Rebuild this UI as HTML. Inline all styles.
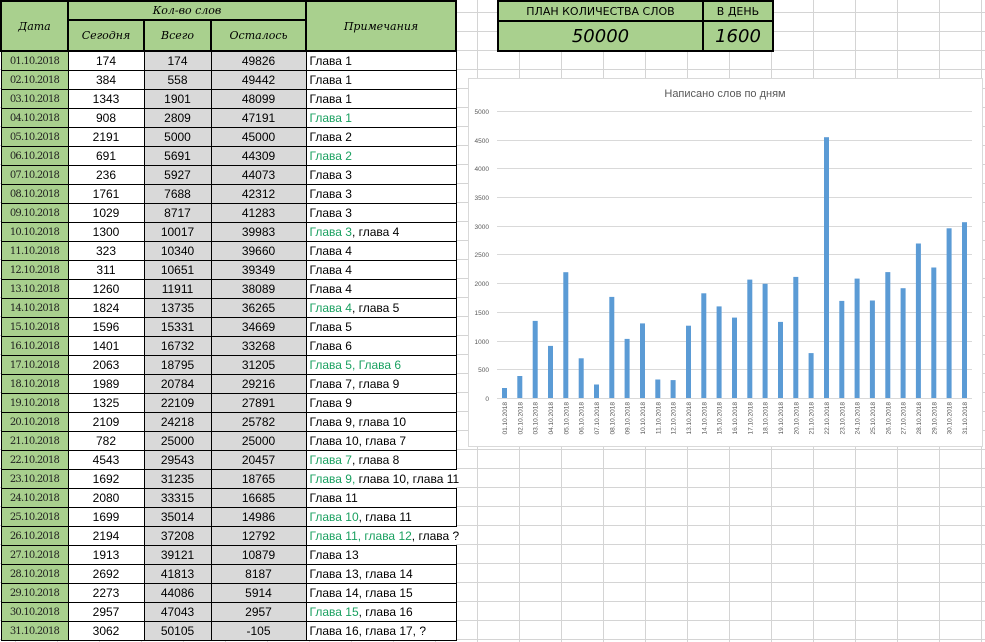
<!DOCTYPE html>
<html><head><meta charset="utf-8">
<style>
html,body{margin:0;padding:0;}
body{width:985px;height:642px;overflow:hidden;position:relative;background:#fff;
font-family:"Liberation Sans","DejaVu Sans",sans-serif;
background-image:linear-gradient(to right,#d4d4d4 1px,transparent 1px),linear-gradient(to bottom,#d4d4d4 1px,transparent 1px);
background-size:42px 19px,42px 19px;background-position:477px 12px,0 12px;}
table{position:absolute;left:0;top:0;border-collapse:collapse;table-layout:fixed;}
.main{width:455px;}
td{padding:0;height:18px;font-size:12px;border:1px solid #000;overflow:visible;white-space:nowrap;background:#fff;}
.h td{background:#a9d08e;font-family:"Comic Sans MS","DejaVu Serif",serif;font-style:italic;font-size:11px;text-align:center;border:2px solid #000;}
.d{background:#a9d08e;font-family:"DejaVu Serif","Liberation Serif",serif;font-size:10px;text-align:center;letter-spacing:-0.8px;color:#222;}
.c{text-align:center;}
.g{background:#d9d9d9;text-align:center;}
.n{padding-left:3px;}
.gr{color:#1aa060;}
.plan{position:absolute;left:497px;top:0;border-collapse:collapse;}
.plan td{background:#a9d08e;border:2px solid #000;text-align:center;font-family:"Comic Sans MS","DejaVu Sans",sans-serif;}
</style></head><body>
<table class="main">
<colgroup><col style="width:67px"><col style="width:76px"><col style="width:67px"><col style="width:95px"><col style="width:150px"></colgroup>
<tr class="h"><td rowspan="2" style="height:48px">Дата</td><td colspan="3" style="height:17px">Кол-во слов</td><td rowspan="2">Примечания</td></tr>
<tr class="h"><td style="height:28px">Сегодня</td><td>Всего</td><td>Осталось</td></tr>
<tr><td class="d">01.10.2018</td><td class="c">174</td><td class="g">174</td><td class="g">49826</td><td class="n">Глава 1</td></tr>
<tr><td class="d">02.10.2018</td><td class="c">384</td><td class="g">558</td><td class="g">49442</td><td class="n">Глава 1</td></tr>
<tr><td class="d">03.10.2018</td><td class="c">1343</td><td class="g">1901</td><td class="g">48099</td><td class="n">Глава 1</td></tr>
<tr><td class="d">04.10.2018</td><td class="c">908</td><td class="g">2809</td><td class="g">47191</td><td class="n"><span class="gr">Глава 1</span></td></tr>
<tr><td class="d">05.10.2018</td><td class="c">2191</td><td class="g">5000</td><td class="g">45000</td><td class="n">Глава 2</td></tr>
<tr><td class="d">06.10.2018</td><td class="c">691</td><td class="g">5691</td><td class="g">44309</td><td class="n"><span class="gr">Глава 2</span></td></tr>
<tr><td class="d">07.10.2018</td><td class="c">236</td><td class="g">5927</td><td class="g">44073</td><td class="n">Глава 3</td></tr>
<tr><td class="d">08.10.2018</td><td class="c">1761</td><td class="g">7688</td><td class="g">42312</td><td class="n">Глава 3</td></tr>
<tr><td class="d">09.10.2018</td><td class="c">1029</td><td class="g">8717</td><td class="g">41283</td><td class="n">Глава 3</td></tr>
<tr><td class="d">10.10.2018</td><td class="c">1300</td><td class="g">10017</td><td class="g">39983</td><td class="n"><span class="gr">Глава 3</span>, глава 4</td></tr>
<tr><td class="d">11.10.2018</td><td class="c">323</td><td class="g">10340</td><td class="g">39660</td><td class="n">Глава 4</td></tr>
<tr><td class="d">12.10.2018</td><td class="c">311</td><td class="g">10651</td><td class="g">39349</td><td class="n">Глава 4</td></tr>
<tr><td class="d">13.10.2018</td><td class="c">1260</td><td class="g">11911</td><td class="g">38089</td><td class="n">Глава 4</td></tr>
<tr><td class="d">14.10.2018</td><td class="c">1824</td><td class="g">13735</td><td class="g">36265</td><td class="n"><span class="gr">Глава 4</span>, глава 5</td></tr>
<tr><td class="d">15.10.2018</td><td class="c">1596</td><td class="g">15331</td><td class="g">34669</td><td class="n">Глава 5</td></tr>
<tr><td class="d">16.10.2018</td><td class="c">1401</td><td class="g">16732</td><td class="g">33268</td><td class="n">Глава 6</td></tr>
<tr><td class="d">17.10.2018</td><td class="c">2063</td><td class="g">18795</td><td class="g">31205</td><td class="n"><span class="gr">Глава 5, Глава 6</span></td></tr>
<tr><td class="d">18.10.2018</td><td class="c">1989</td><td class="g">20784</td><td class="g">29216</td><td class="n">Глава 7, глава 9</td></tr>
<tr><td class="d">19.10.2018</td><td class="c">1325</td><td class="g">22109</td><td class="g">27891</td><td class="n">Глава 9</td></tr>
<tr><td class="d">20.10.2018</td><td class="c">2109</td><td class="g">24218</td><td class="g">25782</td><td class="n">Глава 9, глава 10</td></tr>
<tr><td class="d">21.10.2018</td><td class="c">782</td><td class="g">25000</td><td class="g">25000</td><td class="n">Глава 10, глава 7</td></tr>
<tr><td class="d">22.10.2018</td><td class="c">4543</td><td class="g">29543</td><td class="g">20457</td><td class="n"><span class="gr">Глава 7</span>, глава 8</td></tr>
<tr><td class="d">23.10.2018</td><td class="c">1692</td><td class="g">31235</td><td class="g">18765</td><td class="n" style="border-right:none"><span class="gr">Глава 9,</span> глава 10, глава 11</td></tr>
<tr><td class="d">24.10.2018</td><td class="c">2080</td><td class="g">33315</td><td class="g">16685</td><td class="n">Глава 11</td></tr>
<tr><td class="d">25.10.2018</td><td class="c">1699</td><td class="g">35014</td><td class="g">14986</td><td class="n"><span class="gr">Глава 10</span>, глава 11</td></tr>
<tr><td class="d">26.10.2018</td><td class="c">2194</td><td class="g">37208</td><td class="g">12792</td><td class="n" style="border-right:none"><span class="gr">Глава 11, глава 12</span>, глава ?</td></tr>
<tr><td class="d">27.10.2018</td><td class="c">1913</td><td class="g">39121</td><td class="g">10879</td><td class="n">Глава 13</td></tr>
<tr><td class="d">28.10.2018</td><td class="c">2692</td><td class="g">41813</td><td class="g">8187</td><td class="n">Глава 13, глава 14</td></tr>
<tr><td class="d">29.10.2018</td><td class="c">2273</td><td class="g">44086</td><td class="g">5914</td><td class="n">Глава 14, глава 15</td></tr>
<tr><td class="d">30.10.2018</td><td class="c">2957</td><td class="g">47043</td><td class="g">2957</td><td class="n"><span class="gr">Глава 15</span>, глава 16</td></tr>
<tr><td class="d">31.10.2018</td><td class="c">3062</td><td class="g">50105</td><td class="g">-105</td><td class="n">Глава 16, глава 17, ?</td></tr>
</table>

<table class="plan">
<tr><td style="width:203px;height:16px;font-size:11px">ПЛАН КОЛИЧЕСТВА СЛОВ</td><td style="width:68px;font-size:11px">В ДЕНЬ</td></tr>
<tr><td style="height:28px;font-size:18px;font-style:italic">50000</td><td style="font-size:18px;font-style:italic">1600</td></tr>
</table>

<svg width="985" height="642" style="position:absolute;left:0;top:0" xmlns="http://www.w3.org/2000/svg" font-family="Liberation Sans, DejaVu Sans, sans-serif">
<rect x="468.5" y="78.5" width="514" height="368" fill="#fff" stroke="#d9d9d9"/>
<text x="725" y="97" text-anchor="middle" font-size="11" fill="#595959">Написано слов по дням</text>
<g stroke="#d9d9d9" stroke-width="1">
<line x1="497" x2="972" y1="111.5" y2="111.5"/><line x1="497" x2="972" y1="140.5" y2="140.5"/><line x1="497" x2="972" y1="168.5" y2="168.5"/><line x1="497" x2="972" y1="197.5" y2="197.5"/><line x1="497" x2="972" y1="226.5" y2="226.5"/><line x1="497" x2="972" y1="254.5" y2="254.5"/><line x1="497" x2="972" y1="283.5" y2="283.5"/><line x1="497" x2="972" y1="312.5" y2="312.5"/><line x1="497" x2="972" y1="341.5" y2="341.5"/><line x1="497" x2="972" y1="369.5" y2="369.5"/><line x1="497" x2="972" y1="398.5" y2="398.5"/>
</g>
<g font-size="6.5" fill="#595959" text-anchor="end">
<text x="489" y="114">5000</text><text x="489" y="143">4500</text><text x="489" y="171">4000</text><text x="489" y="200">3500</text><text x="489" y="229">3000</text><text x="489" y="257">2500</text><text x="489" y="286">2000</text><text x="489" y="315">1500</text><text x="489" y="344">1000</text><text x="489" y="372">500</text><text x="489" y="401">0</text>
</g>
<g fill="#5b9bd5">
<rect x="502" y="388" width="5" height="10"/>
<rect x="517.3" y="376" width="5" height="22"/>
<rect x="532.7" y="320.9" width="5" height="77.1"/>
<rect x="548" y="345.9" width="5" height="52.1"/>
<rect x="563.3" y="272.2" width="5" height="125.8"/>
<rect x="578.7" y="358.3" width="5" height="39.7"/>
<rect x="594" y="384.5" width="5" height="13.5"/>
<rect x="609.3" y="296.9" width="5" height="101.1"/>
<rect x="624.6" y="338.9" width="5" height="59.1"/>
<rect x="640" y="323.4" width="5" height="74.6"/>
<rect x="655.3" y="379.5" width="5" height="18.5"/>
<rect x="670.6" y="380.1" width="5" height="17.9"/>
<rect x="686" y="325.7" width="5" height="72.3"/>
<rect x="701.3" y="293.3" width="5" height="104.7"/>
<rect x="716.6" y="306.4" width="5" height="91.6"/>
<rect x="732" y="317.6" width="5" height="80.4"/>
<rect x="747.3" y="279.6" width="5" height="118.4"/>
<rect x="762.6" y="283.8" width="5" height="114.2"/>
<rect x="778" y="321.9" width="5" height="76.1"/>
<rect x="793.3" y="276.9" width="5" height="121.1"/>
<rect x="808.6" y="353.1" width="5" height="44.9"/>
<rect x="824" y="137.2" width="5" height="260.8"/>
<rect x="839.3" y="300.9" width="5" height="97.1"/>
<rect x="854.6" y="278.6" width="5" height="119.4"/>
<rect x="869.9" y="300.5" width="5" height="97.5"/>
<rect x="885.3" y="272.1" width="5" height="125.9"/>
<rect x="900.6" y="288.2" width="5" height="109.8"/>
<rect x="915.9" y="243.5" width="5" height="154.5"/>
<rect x="931.3" y="267.5" width="5" height="130.5"/>
<rect x="946.6" y="228.3" width="5" height="169.7"/>
<rect x="962" y="222.2" width="5" height="175.8"/>
</g>
<g font-size="6.5" fill="#595959" text-anchor="end">
<text transform="translate(507,402) rotate(-90)">01.10.2018</text>
<text transform="translate(522.3,402) rotate(-90)">02.10.2018</text>
<text transform="translate(537.7,402) rotate(-90)">03.10.2018</text>
<text transform="translate(553,402) rotate(-90)">04.10.2018</text>
<text transform="translate(568.3,402) rotate(-90)">05.10.2018</text>
<text transform="translate(583.7,402) rotate(-90)">06.10.2018</text>
<text transform="translate(599,402) rotate(-90)">07.10.2018</text>
<text transform="translate(614.3,402) rotate(-90)">08.10.2018</text>
<text transform="translate(629.6,402) rotate(-90)">09.10.2018</text>
<text transform="translate(645,402) rotate(-90)">10.10.2018</text>
<text transform="translate(660.3,402) rotate(-90)">11.10.2018</text>
<text transform="translate(675.6,402) rotate(-90)">12.10.2018</text>
<text transform="translate(691,402) rotate(-90)">13.10.2018</text>
<text transform="translate(706.3,402) rotate(-90)">14.10.2018</text>
<text transform="translate(721.6,402) rotate(-90)">15.10.2018</text>
<text transform="translate(737,402) rotate(-90)">16.10.2018</text>
<text transform="translate(752.3,402) rotate(-90)">17.10.2018</text>
<text transform="translate(767.6,402) rotate(-90)">18.10.2018</text>
<text transform="translate(783,402) rotate(-90)">19.10.2018</text>
<text transform="translate(798.3,402) rotate(-90)">20.10.2018</text>
<text transform="translate(813.6,402) rotate(-90)">21.10.2018</text>
<text transform="translate(829,402) rotate(-90)">22.10.2018</text>
<text transform="translate(844.3,402) rotate(-90)">23.10.2018</text>
<text transform="translate(859.6,402) rotate(-90)">24.10.2018</text>
<text transform="translate(874.9,402) rotate(-90)">25.10.2018</text>
<text transform="translate(890.3,402) rotate(-90)">26.10.2018</text>
<text transform="translate(905.6,402) rotate(-90)">27.10.2018</text>
<text transform="translate(920.9,402) rotate(-90)">28.10.2018</text>
<text transform="translate(936.3,402) rotate(-90)">29.10.2018</text>
<text transform="translate(951.6,402) rotate(-90)">30.10.2018</text>
<text transform="translate(967,402) rotate(-90)">31.10.2018</text>
</g>
</svg>
</body></html>
